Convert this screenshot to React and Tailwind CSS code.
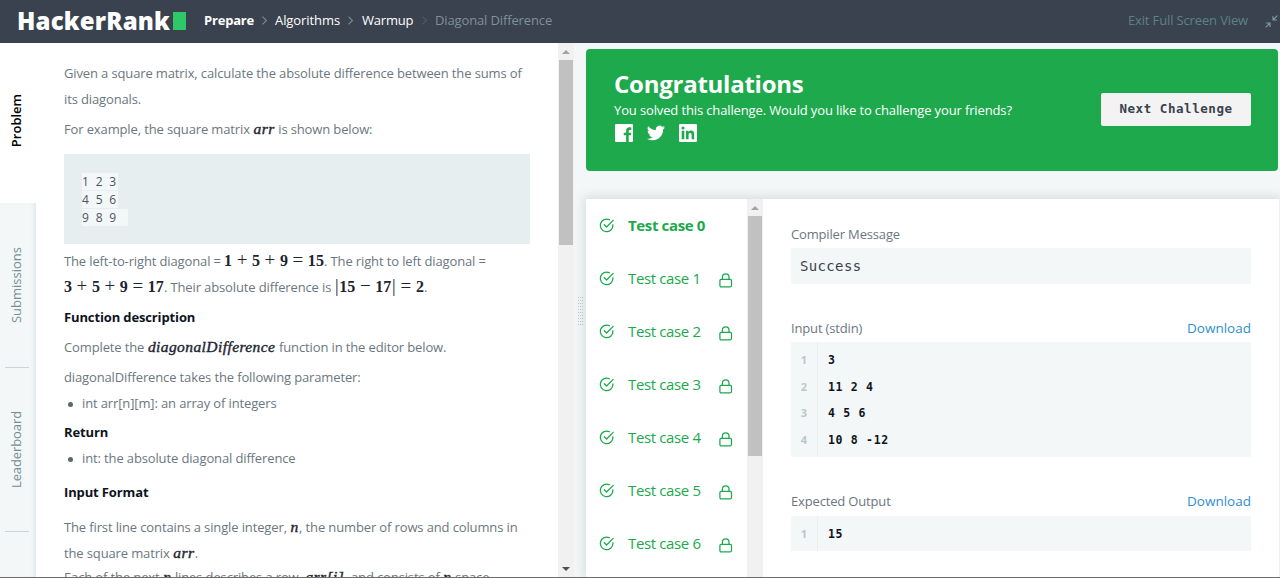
import React from "react";

const M = ({ children, c = "" }) => (
  <span className={`font-['Liberation_Serif'] leading-none text-[#1d2430] ${c}`}>{children}</span>
);

const Var = ({ children }) => <M c="mx-[0.4px] italic text-[15.5px] tracking-[0.42px] [-webkit-text-stroke:0.4px_#1d2430]">{children}</M>;

const Eq = ({ children }) => <M c="text-[16px] font-bold tracking-[0.1px]">{children}</M>;

const Op = ({ children }) => <span className="mx-[4px] inline-block w-[11.8px] text-center text-[19px] font-normal leading-none">{children}</span>;

const Bar = () => <span className="mx-[0.5px] text-[18px] font-normal">|</span>;

const Line = ({ children, c = "" }) => (
  <div className={`h-[26px] whitespace-nowrap leading-[26px] ${c}`}>{children}</div>
);

const Chevron = ({ c = "" }) => (
  <svg className={`shrink-0 ${c}`} width="5" height="9" viewBox="0 0 5 9" fill="none" stroke="currentColor" strokeWidth="1.1">
    <path d="M0.5 0.6 4.4 4.5 0.5 8.400" />
  </svg>
);

const Check = () => (
  <svg className="shrink-0" width="16" height="16" viewBox="0 0 16 16" fill="none" stroke="#1ba94c" strokeWidth="1.3" strokeLinecap="round" strokeLinejoin="round">
    <path d="M13.900 7.800v.6a6.300 6.300 0 1 1-3.600-5.700" />
    <path d="M5.300 7.800 7.600 10 14.200 3.400" />
  </svg>
);

const Lock = () => (
  <svg className="shrink-0" width="14" height="15" viewBox="0 0 14 15" fill="none" stroke="#1ba94c" strokeWidth="1.25" strokeLinecap="round" strokeLinejoin="round">
    <rect x="0.9" y="6.3" width="11.600" height="7.5" rx="1.2" />
    <path d="M3.4 6.2V4.2a3.3 3.3 0 0 1 6.6 0v2" />
  </svg>
);

const Arrow = ({ down = false, color = "#a3a3a3" }) => (
  <svg className="shrink-0" width="8" height="4" viewBox="0 0 8 4">
    <path d={down ? "M0 0h8L4 4z" : "M0 4h8L4 0z"} fill={color} />
  </svg>
);

const Header = () => (
  <header className="flex h-[43px] shrink-0 items-center bg-[#39424e] text-[13px] text-white">
    <div className="ml-[17px] flex w-[169px] shrink-0 items-center justify-between pb-[2px]">
      <span className="whitespace-nowrap text-[24px] font-extrabold leading-[30px] tracking-[0.18px]">HackerRank</span>
      <span className="h-[18px] w-[13px] shrink-0 bg-[#2ec866]" />
    </div>
    <nav className="ml-[18px] flex items-center whitespace-nowrap pb-[2px]">
      <span className="w-[50px] font-bold tracking-[-0.2px]">Prepare</span>
      <Chevron c="ml-[8px] text-[#738f93]" />
      <span className="ml-[8px] w-[65px] tracking-[-0.08px]">Algorithms</span>
      <Chevron c="ml-[8px] text-[#738f93]" />
      <span className="ml-[9px] w-[52px] tracking-[-0.2px]">Warmup</span>
      <Chevron c="ml-[8px] text-[#4d5b68]" />
      <span className="ml-[8px] tracking-[-0.13px] text-[#7f9196]">Diagonal Difference</span>
    </nav>
    <div className="ml-auto flex items-center whitespace-nowrap pb-px tracking-[-0.14px] text-[#5f8184]">
      <span className="mr-[17px]">Exit Full Screen View</span>
      <svg className="mr-[2px]" width="13" height="13" viewBox="0 0 13 13" fill="none" stroke="#7b9a9b" strokeWidth="1.2">
        <path d="M12.3.7 8 5M8 1.2V5h4M.7 12.3 5 8M1 8h4v4" />
      </svg>
    </div>
  </header>
);

const Tab = ({ children, c = "" }) => (
  <div className={`flex w-[34px] items-center justify-center ${c}`}>
    <span className="rotate-180 whitespace-nowrap [writing-mode:vertical-rl]">{children}</span>
  </div>
);

const Sidebar = () => (
  <aside className="flex w-9 shrink-0 flex-col text-[13px] text-[#738f93]">
    <Tab c="h-[160px] pb-[4px] font-semibold text-black">Problem</Tab>
    <div className="flex flex-1 flex-col bg-[#f3f7f7] shadow-[inset_-4px_0_5px_-3px_#d9e0e2]">
      <Tab c="h-[164px]">Submissions</Tab>
      <span className="ml-[5px] h-px w-6 bg-[#c8d6d8]" />
      <Tab c="h-[163px] tracking-[-0.1px]">Leaderboard</Tab>
      <span className="ml-[5px] h-px w-6 bg-[#c8d6d8]" />
    </div>
  </aside>
);

const Bullet = () => <span className="mr-[9px] ml-[4px] inline-block size-[5px] rounded-full bg-[#576871] align-middle" />;

const Problem = () => (
  <article className="w-[522px] shrink-0 overflow-hidden pl-7 pt-[17px] text-[13px] tracking-[-0.13px] text-[#6b7780]">
    <Line>Given a square matrix, calculate the absolute difference between the sums of</Line>
    <Line>its diagonals.</Line>
    <Line c="mt-1">For example, the square matrix <Var>arr</Var> is shown below:</Line>
    <pre className="mt-[12px] h-[90px] w-[466px] bg-[#e7eeef] pl-[18px] pt-[19px] font-['Open_Sans'] text-[12px] leading-[18px] tracking-normal text-[#4c5560] [word-spacing:3.7px]">
      <code className="mb-px block h-[17px] w-[36px] bg-[#f3f7f7] font-['Open_Sans']">1 2 3</code>
      <code className="mb-px block h-[17px] w-[36px] bg-[#f3f7f7] font-['Open_Sans']">4 5 6</code>
      <code className="block h-[17px] w-[46px] bg-[#f3f7f7] font-['Open_Sans']">9 8 9</code>
    </pre>
    <Line c="mt-[4px]">The left-to-right diagonal = <Eq>1<Op>+</Op>5<Op>+</Op>9<Op>=</Op>15</Eq>. The right to left diagonal =</Line>
    <Line><Eq>3<Op>+</Op>5<Op>+</Op>9<Op>=</Op>17</Eq>. Their absolute difference is <Eq><Bar />15<Op>−</Op>17<Bar /><Op>=</Op>2</Eq>.</Line>
    <Line c="mt-[4px] font-bold text-[#0e141e]">Function description</Line>
    <Line c="mt-[4px]">Complete the <Var>diagonalDifference</Var> function in the editor below.</Line>
    <Line c="mt-[4px]">diagonalDifference takes the following parameter:</Line>
    <Line><Bullet />int arr[n][m]: an array of integers</Line>
    <Line c="mt-[3px] font-bold text-[#0e141e]">Return</Line>
    <Line><Bullet />int: the absolute diagonal difference</Line>
    <Line c="mt-[8px] font-bold text-[#0e141e]">Input Format</Line>
    <Line c="mt-[9px]">The first line contains a single integer, <Var>n</Var>, the number of rows and columns in</Line>
    <Line>the square matrix <Var>arr</Var>.</Line>
    <Line c="mt-[-2px]">Each of the next <Var>n</Var> lines describes a row, <Var>arr[i]</Var>, and consists of <Var>n</Var> space-</Line>
  </article>
);

const Divider = () => (
  <div className="flex w-[12px] shrink-0 items-center justify-center bg-[#f3f7f7]">
    <span className="mt-[2px] grid grid-cols-3 gap-x-px gap-y-[2px]">
      {Array.from({ length: 30 }, (_, i) => <i key={i} className="h-px w-px bg-[#c2c9cb]" />)}
    </span>
  </div>
);

const Banner = () => (
  <section className="mr-[2px] mt-[6px] flex h-[122px] shrink-0 items-center justify-between rounded-[4px] bg-[#1ea94c] pl-7 pr-[27px] text-white">
    <div className="mb-[9px]">
      <h1 className="text-[24px] font-bold leading-[30px] tracking-[-0.25px]">Congratulations</h1>
      <p className="whitespace-nowrap text-[13px] leading-[22px] tracking-[-0.13px]">You solved this challenge. Would you like to challenge your friends?</p>
      <div className="mt-[3px] flex h-[18px] items-center pl-[1px]">
        <svg width="18" height="18" viewBox="0 0 18 18"><path fill="#fff" fillRule="evenodd" d="M1 0h16v0a1 1 0 0 1 1 1v16a1 1 0 0 1-1 1h-3.300v-6.700h2.200l.4-2.500h-2.600V7.100c0-.8.400-1.200 1.300-1.200h1.300V3.500c-.5-.1-1.200-.2-1.900-.2-2.100 0-3.300 1.200-3.300 3.400v2.100H8.700v2.500h2.400V18H1a1 1 0 0 1-1-1V1a1 1 0 0 1 1-1z" /></svg>
        <svg className="ml-[14px]" width="18" height="18" viewBox="0 0 24 24" fill="#fff"><path d="M23.95 4.570a10 10 0 0 1-2.820.780 4.960 4.960 0 0 0 2.160-2.730c-.950.560-2 .960-3.130 1.190a4.920 4.920 0 0 0-8.380 4.480C7.690 8.100 4.070 6.130 1.640 3.160a4.930 4.930 0 0 0 1.520 6.570 4.900 4.900 0 0 1-2.230-.610v.060a4.920 4.920 0 0 0 3.950 4.830 5 5 0 0 1-2.210.080 4.940 4.940 0 0 0 4.600 3.420A9.870 9.870 0 0 1 0 19.540a14 14 0 0 0 7.550 2.210c9.050 0 14-7.500 14-13.980 0-.210 0-.420-.020-.630a10 10 0 0 0 2.420-2.570z" /></svg>
        <svg className="ml-[14px]" width="18" height="18" viewBox="0 0 18 18"><path fill="#fff" fillRule="evenodd" d="M1 0h16a1 1 0 0 1 1 1v16a1 1 0 0 1-1 1H1a1 1 0 0 1-1-1V1a1 1 0 0 1 1-1zM2.700 6.800h2.600v8.500H2.700zM4 2.500a1.550 1.550 0 1 1 0 3.100 1.550 1.550 0 0 1 0-3.100zM7 6.800h2.500V8c.4-.7 1.300-1.400 2.500-1.400 2.700 0 3.200 1.700 3.200 4v4.700h-2.600v-4.200c0-1 0-2.200-1.400-2.200s-1.600 1-1.600 2.200v4.200H7z" /></svg>
      </div>
    </div>
    <button className="mb-[2px] h-[33px] w-[150px] whitespace-nowrap rounded-[2px] bg-[#f3f3f3] font-['DejaVu_Sans_Mono'] text-[12.5px] font-bold tracking-[0.55px] text-[#39424e]">Next Challenge</button>
  </section>
);

const TestCases = () => (
  <div className="w-[161px] shrink-0 overflow-hidden bg-white text-[15px] text-[#1ba94c]">
    <div className="mt-[-1px]">
      {[0, 1, 2, 3, 4, 5, 6].map((n) => (
        <div key={n} className="flex h-[53.1px] items-center pl-[13px]">
          <Check />
          <span className={`ml-[13px] w-[91px] whitespace-nowrap leading-5 tracking-[-0.36px] ${n === 0 ? "font-bold" : ""}`}>Test case {n}</span>
          {n > 0 && <span className="mt-[5px]"><Lock /></span>}
        </div>
      ))}
    </div>
  </div>
);

const Code = ({ lines, c = "" }) => (
  <div className={`flex bg-[#f3f7f7] font-bold ${c}`}>
    <div className="w-[27px] shrink-0 border-r border-[#e9eff0] pt-1 text-center text-[11px] text-[#b7c9cc]">
      {lines.map((_, i) => <div key={i} className="h-[26.6px] leading-[27px]">{i + 1}</div>)}
    </div>
    <pre className="pl-[10px] pt-[5px] font-['DejaVu_Sans_Mono'] text-[11.5px] tracking-[0.7px] text-[#0e141e]">
      {lines.map((l, i) => <div key={i} className="h-[26.6px] leading-[27px]">{l}</div>)}
    </pre>
  </div>
);

const Label = ({ children, download, c = "" }) => (
  <div className={`flex h-[20px] items-center justify-between whitespace-nowrap leading-[20px] ${c}`}>
    <span className="tracking-[-0.16px]">{children}</span>
    {download && <a className="text-[13.5px] text-[#2e8fd0]">Download</a>}
  </div>
);

const Output = () => (
  <div className="mr-px flex-1 bg-white pl-[28px] pr-[28px] text-[13px] text-[#6b7780]">
    <Label c="mt-[25px]">Compiler Message</Label>
    <div className="mt-[4px] h-[36px] bg-[#f3f7f7] pl-[9px] font-['DejaVu_Sans_Mono'] text-[14px] leading-[36px] tracking-[0.35px] text-[#39424e]">Success</div>
    <Label download c="mt-[34px]">Input (stdin)</Label>
    <Code c="mt-[4px] h-[115px]" lines={["3", "11 2 4", "4 5 6", "10 8 -12"]} />
    <Label download c="mt-[34px]">Expected Output</Label>
    <Code c="mt-[5px] h-[35px]" lines={["15"]} />
  </div>
);

export default function App() {
  return (
    <div className="flex h-[578px] w-[1280px] flex-col overflow-hidden border-b border-[#6c6c6c] bg-white font-['Open_Sans',sans-serif]">
      <Header />
      <main className="flex min-h-0 flex-1">
        <Sidebar />
        <Problem />
        <div className="flex w-4 shrink-0 flex-col items-center bg-[#f1f1f1]">
          <span className="flex h-[17px] items-center"><Arrow /></span>
          <span className="h-[185px] w-[14px] bg-[#c1c1c1]" />
          <span className="mt-auto flex h-[17px] items-center"><Arrow down color="#505050" /></span>
        </div>
        <Divider />
        <div className="flex min-w-0 flex-1 flex-col bg-[#f3f7f7]">
          <Banner />
          <section className="mt-[28px] flex min-h-0 flex-1 bg-[#eef1f2] shadow-[0_0_10px_2px_rgba(60,80,90,0.16)]">
            <TestCases />
            <div className="flex w-4 shrink-0 flex-col items-center bg-[#f1f1f1]">
              <span className="flex h-[17px] items-center"><Arrow /></span>
              <span className="h-[240px] w-[14px] bg-[#c1c1c1]" />
            </div>
            <Output />
          </section>
        </div>
      </main>
    </div>
  );
}
